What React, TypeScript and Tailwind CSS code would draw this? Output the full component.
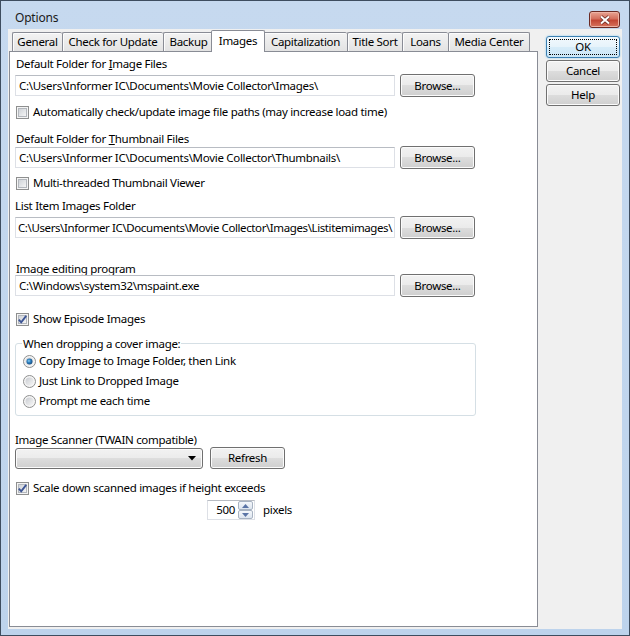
import React from "react";

type TabDef = { label: string; w: string; active?: boolean };

const tabs: TabDef[] = [
  { label: "General", w: "w-[50px]" },
  { label: "Check for Update", w: "w-[101px]" },
  { label: "Backup", w: "w-[50px]" },
  { label: "Images", w: "w-[54px]", active: true },
  { label: "Capitalization", w: "w-[84px]" },
  { label: "Title Sort", w: "w-[55px]" },
  { label: "Loans", w: "w-[46px]" },
  { label: "Media Center", w: "w-[82px]" },
];

const btn =
  "rounded-[3px] border border-[#707070] bg-[linear-gradient(#f2f2f2_0%,#ebebeb_50%,#dddddd_50%,#cfcfcf_100%)] shadow-[inset_0_0_0_1px_#fbfbfb] flex items-center justify-center text-black";

function Checkbox({ checked }: { checked?: boolean }) {
  return (
    <svg width="13" height="13" viewBox="0 0 13 13" className="shrink-0">
      <defs>
        <linearGradient id="cbfill" x1="0" y1="0" x2="1" y2="1">
          <stop offset="0" stopColor="#cdd1d6" />
          <stop offset="1" stopColor="#f7f7f7" />
        </linearGradient>
      </defs>
      <rect x="0.5" y="0.5" width="12" height="12" fill="#f4f4f4" stroke="#8e8f8f" />
      <rect x="2.5" y="2.5" width="8" height="8" fill="url(#cbfill)" stroke="#b3b7bd" />
      {checked && (
        <path d="M2.8 6.6 L5.2 9.3 L10.2 2.8" stroke="#3d5595" strokeWidth="1.9" fill="none" />
      )}
    </svg>
  );
}

function Radio({ checked }: { checked?: boolean }) {
  return (
    <svg width="13" height="13" viewBox="0 0 13 13" className="shrink-0">
      <defs>
        <linearGradient id="rdfill" x1="0" y1="0" x2="1" y2="1">
          <stop offset="0" stopColor="#c9ccd1" />
          <stop offset="1" stopColor="#f6f6f6" />
        </linearGradient>
        <radialGradient id="rdsel" cx="0.4" cy="0.4" r="0.6">
          <stop offset="0" stopColor="#8fd0f4" />
          <stop offset="0.5" stopColor="#2a7dbd" />
          <stop offset="1" stopColor="#1b4f83" />
        </radialGradient>
      </defs>
      <circle cx="6.5" cy="6.5" r="6" fill="#f4f4f4" stroke="#8e8f8f" />
      <circle cx="6.5" cy="6.5" r="4" fill="url(#rdfill)" />
      {checked && <circle cx="6.5" cy="6.5" r="3" fill="url(#rdsel)" />}
    </svg>
  );
}

function PathRow({ value, tight }: { value: string; tight?: boolean }) {
  return (
    <div className="flex items-center h-[23px]">
      <div
        className={`w-[380px] h-[21px] bg-white border border-[#dde0e6] border-t-[#b8bcc3] flex items-center whitespace-nowrap overflow-hidden ${
          tight ? "pl-[2px] tracking-[-0.4px]" : "pl-[3px]"
        }`}
      >
        {value}
      </div>
      <div className={`${btn} w-[75px] h-[23px] ml-[5px]`}>Browse...</div>
    </div>
  );
}

export default function App() {
  return (
    <div className="w-[630px] h-[636px] bg-[linear-gradient(#c6d9ef,#bdd3ec)] border border-[#3e4d5f] flex flex-col font-['Noto_Sans',sans-serif] text-[11.5px] tracking-[-0.3px] text-black leading-[16px]">
      {/* title bar */}
      <div className="h-[28px] flex items-start shrink-0">
        <div className="pl-[14px] pt-[9px] text-[12px] tracking-[-0.2px] text-[#1a1a1a]">Options</div>
        <div className="ml-auto mr-[9px] mt-[10px] w-[31px] h-[17px] rounded-[3px] border border-[#6b2a24] bg-[linear-gradient(#e8a493_0%,#d46f5d_45%,#c24634_55%,#d8745e_100%)] shadow-[inset_0_0_0_1px_#eeb3a5] flex items-center justify-center">
          <svg width="12" height="10" viewBox="0 0 12 10">
            <path d="M2 1.5 L10 8.5 M10 1.5 L2 8.5" stroke="#6a2a22" strokeWidth="3.6" />
            <path d="M2 1.5 L10 8.5 M10 1.5 L2 8.5" stroke="#ffffff" strokeWidth="2" />
          </svg>
        </div>
      </div>

      {/* client area */}
      <div className="flex-1 mx-[7px] mb-[6px] bg-[#f0f0f0] flex">
        {/* tab control */}
        <div className="ml-[1px] w-[529px] mt-[1px] flex flex-col">
          <div className="h-[21px] flex items-end pl-[3px]">
            {tabs.map((t, i) =>
              t.active ? (
                <div
                  key={t.label}
                  className={`${t.w} h-[22px] -mx-[2px] -mb-[1px] relative z-10 bg-white border border-b-0 border-[#898c95] rounded-t-[2px] flex items-start justify-center pt-[2px]`}
                >
                  {t.label}
                </div>
              ) : (
                <div
                  key={t.label}
                  className={`${t.w} h-[19px] border-t border-l ${i === tabs.length - 1 ? "border-r" : ""} border-[#898c95] rounded-t-[2px] bg-[linear-gradient(#f3f3f3,#e3e3e3)] shadow-[inset_1px_1px_0_#fcfcfc] flex items-center justify-center whitespace-nowrap`}
                >
                  {t.label}
                </div>
              )
            )}
          </div>

          <div className="h-[576px] bg-white border border-[#898c95] flex flex-col pl-[5px]">
            <div className="mt-[4px] h-[16px] ml-[1px]">
              Default Folder for <span className="underline">I</span>mage Files
            </div>
            <div className="mt-[2px]">
              <PathRow value="C:\Users\Informer IC\Documents\Movie Collector\Images\" />
            </div>
            <div className="mt-[7px] h-[16px] ml-[1px] flex items-center gap-[4px]">
              <Checkbox />
              <span>Automatically check/update image file paths (may increase load time)</span>
            </div>

            <div className="mt-[11px] h-[16px] ml-[1px]">
              Default Folder for <span className="underline">T</span>humbnail Files
            </div>
            <div className="-mt-[1px]">
              <PathRow value="C:\Users\Informer IC\Documents\Movie Collector\Thumbnails\" />
            </div>
            <div className="mt-[6px] h-[16px] ml-[1px] flex items-center gap-[4px]">
              <Checkbox />
              <span>Multi-threaded Thumbnail Viewer</span>
            </div>

            <div className="mt-[7px] h-[16px]">List Item Images Folder</div>
            <div className="mt-[2px]">
              <PathRow
                tight
                value="C:\Users\Informer IC\Documents\Movie Collector\Images\Listitemimages\"
              />
            </div>

            <div className="mt-[22px] h-[16px] ml-[1px]">Image editing program</div>
            <div className="-mt-[3px]">
              <PathRow value="C:\Windows\system32\mspaint.exe" />
            </div>

            <div className="mt-[14px] h-[16px] ml-[1px] flex items-center gap-[4px]">
              <Checkbox checked />
              <span>Show Episode Images</span>
            </div>

            {/* group box */}
            <div className="mt-[16px] w-[461px] h-[73px] border border-[#d5dfe5] rounded-[3px] flex flex-col">
              <div className="-mt-[8px] ml-[6px] h-[16px] px-[1px] bg-white self-start">
                When dropping a cover image:
              </div>
              <div className="flex flex-col pl-[7px] -mt-[1px]">
                <div className="h-[20px] flex items-center gap-[3px]">
                  <Radio checked />
                  <span>Copy Image to Image Folder, then Link</span>
                </div>
                <div className="h-[20px] flex items-center gap-[3px]">
                  <Radio />
                  <span>Just Link to Dropped Image</span>
                </div>
                <div className="h-[20px] flex items-center gap-[3px]">
                  <Radio />
                  <span>Prompt me each time</span>
                </div>
              </div>
            </div>

            <div className="mt-[17px] h-[14px] leading-[14px]">Image Scanner (TWAIN compatible)</div>
            <div className="flex items-center h-[22px]">
              <div className={`${btn} w-[188px] h-[21px] justify-end pr-[6px]`}>
                <svg width="8" height="5" viewBox="0 0 8 5">
                  <path d="M0 0 H8 L4 4.5 Z" fill="#000" />
                </svg>
              </div>
              <div className={`${btn} w-[75px] h-[22px] ml-[7px]`}>Refresh</div>
            </div>

            <div className="mt-[11px] h-[16px] ml-[1px] flex items-center gap-[4px]">
              <Checkbox checked />
              <span>Scale down scanned images if height exceeds</span>
            </div>

            <div className="mt-[4px] ml-[192px] flex items-center h-[20px]">
              <div className="w-[48px] h-[20px] bg-white border border-[#dde0e6] border-t-[#b8bcc3] flex items-center">
                <span className="w-[30px] text-right pr-[3px]">500</span>
                <div className="ml-auto mr-[1px] w-[15px] h-[18px] flex flex-col">
                  <div className="h-[9px] rounded-[2px] border border-[#a8b3c2] bg-[linear-gradient(#f4f7fb,#dde5ef)] flex items-center justify-center">
                    <svg width="7" height="4" viewBox="0 0 7 4">
                      <path d="M0 4 L3.5 0 L7 4 Z" fill="#5a74a6" />
                    </svg>
                  </div>
                  <div className="h-[9px] rounded-[2px] border border-[#a8b3c2] bg-[linear-gradient(#f4f7fb,#dde5ef)] flex items-center justify-center">
                    <svg width="7" height="4" viewBox="0 0 7 4">
                      <path d="M0 0 L7 0 L3.5 4 Z" fill="#5a74a6" />
                    </svg>
                  </div>
                </div>
              </div>
              <span className="ml-[8px]">pixels</span>
            </div>
          </div>
        </div>

        {/* right buttons */}
        <div className="ml-[8px] mt-[7px] w-[74px] flex flex-col gap-[2px]">
          <div className="h-[22px] rounded-[3px] border border-[#3c7fb1] bg-[linear-gradient(#f2f9fd_0%,#e6f3fb_50%,#d7ecf9_50%,#cbe6f7_100%)] shadow-[0_0_2px_#7ec4ec] flex items-center justify-center outline-1 outline-dotted outline-black outline-offset-[-4px]">
            OK
          </div>
          <div className={`${btn} h-[22px]`}>Cancel</div>
          <div className={`${btn} h-[22px]`}>Help</div>
        </div>
      </div>
    </div>
  );
}
